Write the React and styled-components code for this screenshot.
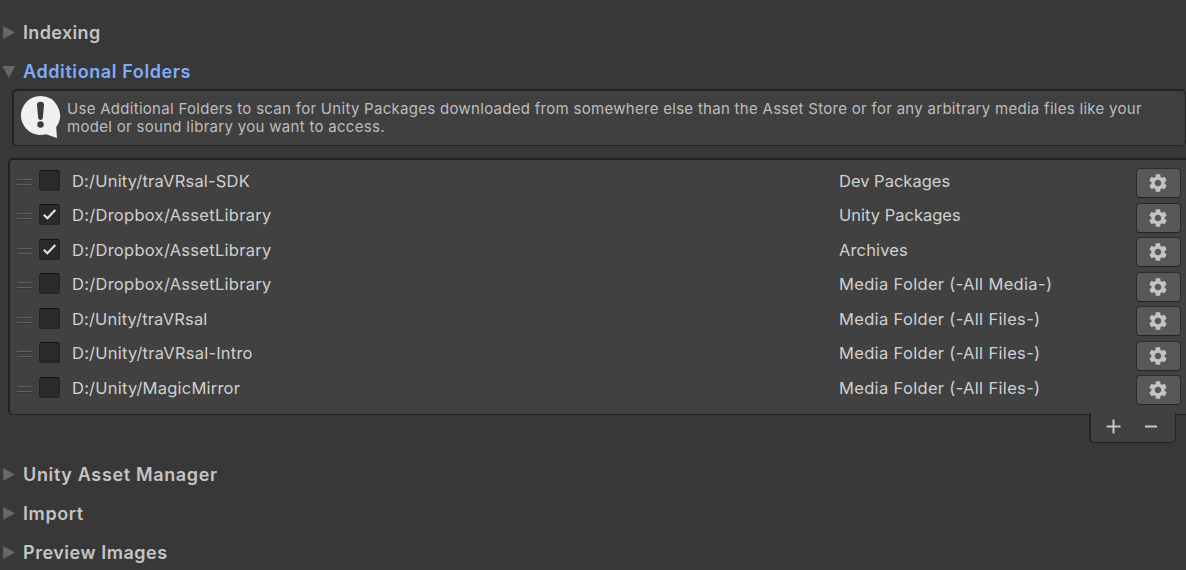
import React from "react";
import styled, { createGlobalStyle } from "styled-components";
import { MdSettings } from "react-icons/md";

const GlobalStyle = createGlobalStyle`
  html, body { margin: 0; background: #383838; overflow: hidden; }
  *, *::before, *::after { box-sizing: border-box; }
`;

const Page = styled.main`
  width: 1186px;
  height: 570px;
  padding-top: 15px;
  overflow: hidden;
  background: #383838;
  color: #c8c8c8;
  font-family: Inter, "Liberation Sans", sans-serif;
`;

const Group = styled.div`
  display: flex;
  flex-direction: column;
  gap: 4px;
`;

const Heading = styled.h2`
  display: flex;
  align-items: center;
  height: 35px;
  margin: 0;
  padding-left: 2px;
  font-size: 18px;
  font-weight: 600;
  letter-spacing: ${(p) => p.$spacing ?? 0.6}px;
  white-space: nowrap;
  color: ${(p) => (p.$open ? "#7fadf8" : "#c4c4c4")};

  svg {
    flex: none;
    width: 14px;
    height: 14px;
    margin-right: 7px;
    fill: #676767;
  }
`;

const HelpBox = styled.section`
  display: flex;
  height: 57px;
  margin-left: 12px;
  padding: 5px 0 0 7px;
  border: solid #232323;
  border-width: 2px 1px 1px 2px;
  border-radius: 5px;
  background: #404040;

  svg {
    flex: none;
    width: 40px;
    height: 43px;
  }
`;

const HelpText = styled.p`
  margin: 4px 0 0 6px;
  font-size: 15px;
  line-height: 18px;
  white-space: nowrap;
  color: #bdbdbd;
`;

const HelpLine = styled.span`
  display: block;
  letter-spacing: ${(p) => p.$spacing}px;
`;

const List = styled.section`
  height: 257px;
  margin: 12px 0 0 8px;
  padding: 4px 5px 0 7px;
  border: solid #232323;
  border-width: 2px 0 1px 2px;
  border-radius: 5px 0 0 5px;
  background: #414141;
`;

const Row = styled.div`
  display: grid;
  grid-template-columns: 22px 33px 767px 1fr 45px;
  align-items: start;
  height: 34.5px;
  font-size: 16.5px;
  line-height: 20px;
  white-space: nowrap;
  color: #d0d0d0;
`;

const Handle = styled.span`
  width: 15px;
  height: 6px;
  margin-top: 14.9px;
  border: solid #606060;
  border-width: 1px 0;
  box-shadow: 0 1px #383838, inset 0 1px #383838;
`;

const Checkbox = styled.span`
  width: 21px;
  height: 21px;
  margin-top: 5.9px;
  border: 1px solid #222;
  border-top-color: #111;
  border-radius: 3px;
  background: #2a2a2a;

  svg {
    display: block;
    width: 19px;
    height: 19px;
  }
`;

const Cell = styled.span`
  padding-top: 6.9px;
  letter-spacing: ${(p) => p.$spacing}px;
`;

const GearButton = styled.button`
  display: flex;
  align-items: center;
  justify-content: center;
  width: 45px;
  height: 30px;
  margin-top: 4px;
  padding: 0 1px 0 0;
  border: 1px solid #2b2b2b;
  border-bottom-color: #222;
  border-radius: 4px;
  background: #585858;
  color: #c4c4c4;
`;

const Footer = styled.div`
  position: relative;
  display: flex;
  align-items: center;
  justify-content: space-between;
  width: 87px;
  height: 30px;
  margin: -2px 10px 14px auto;
  padding: 0 16px 2px 15px;
  border: solid #232323;
  border-width: 0 1px 1px 2px;
  border-radius: 0 0 5px 5px;
  background: #414141;

  svg {
    width: 15px;
    height: 15px;
    stroke: #c8c8c8;
    stroke-width: 2;
  }
`;

const folders = [
  { path: "D:/Unity/traVRsal-SDK", type: "Dev Packages", spacing: [0.2, 0] },
  { path: "D:/Dropbox/AssetLibrary", type: "Unity Packages", on: true, spacing: [0.28, 0] },
  { path: "D:/Dropbox/AssetLibrary", type: "Archives", on: true, spacing: [0.28, 0.15] },
  { path: "D:/Dropbox/AssetLibrary", type: "Media Folder (-All Media-)", spacing: [0.28, 0.33] },
  { path: "D:/Unity/traVRsal", type: "Media Folder (-All Files-)", spacing: [0.17, 0.33] },
  { path: "D:/Unity/traVRsal-Intro", type: "Media Folder (-All Files-)", spacing: [0.22, 0.33] },
  { path: "D:/Unity/MagicMirror", type: "Media Folder (-All Files-)", spacing: [0.22, 0.33] },
];

function Foldout({ open, spacing, children }) {
  return (
    <Heading $open={open} $spacing={spacing}>
      <svg viewBox="0 0 14 14">
        <path d={open ? "M0.3 1H13.2L6.8 12.7Z" : "M1.2 0V12.8L13 6.4Z"} />
      </svg>
      {children}
    </Heading>
  );
}

function FolderRow({ path, type, on, spacing }) {
  return (
    <Row>
      <Handle />
      <Checkbox>
        {on && (
          <svg viewBox="0 0 19 19">
            <path d="M3.8 9.7L7.4 13.3L15.3 5" fill="none" stroke="#e6e6e6" strokeWidth="2" />
          </svg>
        )}
      </Checkbox>
      <Cell $spacing={spacing[0]}>{path}</Cell>
      <Cell $spacing={spacing[1]}>{type}</Cell>
      <GearButton aria-label="Folder settings">
        <MdSettings size={22} />
      </GearButton>
    </Row>
  );
}

export default function App() {
  return (
    <Page>
      <GlobalStyle />
      <Group>
        <Foldout spacing={0.35}>Indexing</Foldout>
        <Foldout open>Additional Folders</Foldout>
      </Group>
      <HelpBox>
        <svg viewBox="0 0 40 43">
          <path
            d="M19.5 0A19.5 19.5 0 1 0 25 38.2L36 42L35.2 31A19.5 19.5 0 0 0 19.5 0Z"
            fill="#f0f0f0"
          />
          <path d="M16 9Q16 5.8 19.5 5.8T23 9L21.8 22Q21.5 24 19.5 24T17.2 22Z" fill="#3c3c3c" />
          <circle cx="19.5" cy="28.5" r="3.2" fill="#3c3c3c" />
        </svg>
        <HelpText>
          <HelpLine $spacing={0.289}>
            Use Additional Folders to scan for Unity Packages downloaded from somewhere else than
            the Asset Store or for any arbitrary media files like your
          </HelpLine>
          <HelpLine $spacing={0.3}>model or sound library you want to access.</HelpLine>
        </HelpText>
      </HelpBox>
      <List>
        {folders.map((f, i) => (
          <FolderRow key={i} {...f} />
        ))}
      </List>
      <Footer>
        <svg viewBox="0 0 15 15">
          <path d="M7.5 0.5V14.5M0.5 7.5H14.5" />
        </svg>
        <svg viewBox="0 0 15 15">
          <path d="M1 7.5H13" />
        </svg>
      </Footer>
      <Group>
        <Foldout spacing={0.65}>Unity Asset Manager</Foldout>
        <Foldout>Import</Foldout>
        <Foldout spacing={0.53}>Preview Images</Foldout>
      </Group>
    </Page>
  );
}
